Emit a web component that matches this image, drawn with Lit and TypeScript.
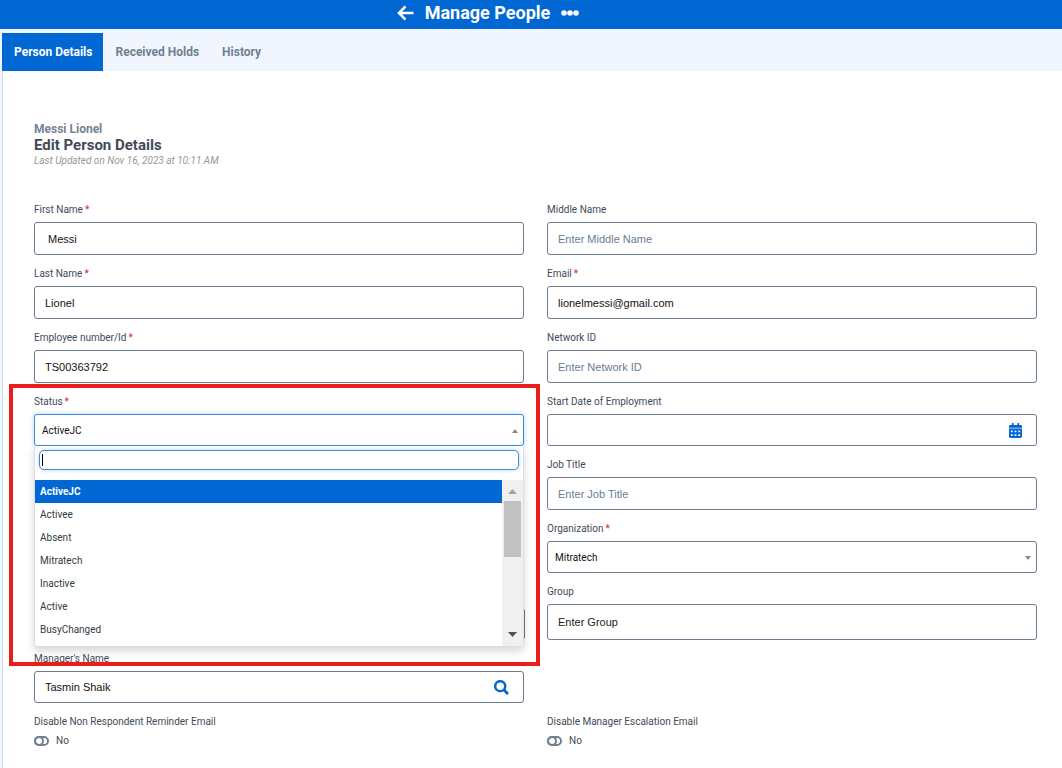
import { LitElement, html, css, svg, nothing } from "lit";
import { customElement, state } from "lit/decorators.js";
import { classMap } from "lit/directives/class-map.js";

const STATUSES = ["ActiveJC", "Activee", "Absent", "Mitratech", "Inactive", "Active", "BusyChanged"];
const TABS = ["Person Details", "Received Holds", "History"];

@customElement("app-root")
export class AppRoot extends LitElement {
  @state() private tab = "Person Details";
  @state() private status = "ActiveJC";

  static styles = css`
    :host {
      display: flex;
      flex-direction: column;
      min-height: 100vh;
      overflow: hidden;
      box-sizing: border-box;
      background: #f1f6fe;
      color: #414b57;
      font: 10px/16px Roboto, "Liberation Sans", sans-serif;
    }
    *, *::before, *::after { box-sizing: border-box; }
    button, input, select, textarea { font: inherit; margin: 0; border-radius: 0; }
    button { border: 0; background: none; padding: 0; color: inherit; }
    svg { display: block; }

    .topbar {
      display: flex;
      align-items: center;
      justify-content: center;
      height: 29px;
      padding: 0 86px 4px 0;
      background: #0067d3;
      color: #fff;
    }
    .title { margin: 0 11px; font-size: 18px; line-height: 24px; font-weight: 700; }

    .tabs { display: flex; padding: 4px 0 0 2px; }
    .tab { height: 38px; padding: 0 11px 0 12px; font-size: 12px; font-weight: 700; color: #70808f; }
    .tab.active { background: #0067d3; color: #fff; }

    .sheet {
      flex: 1;
      margin-left: 2px;
      padding: 50px 25px 16px 31px;
      border-left: 1px solid #d0deeb;
      background: #fff;
    }
    .person { font-size: 12px; font-weight: 700; color: #738494; margin: 0; }
    .heading { font-size: 15px; font-weight: 700; color: #3f4b58; margin: 0; }
    .updated { font-style: italic; color: #979797; margin: 0; }

    .form { display: flex; flex-direction: column; gap: 11px; margin-top: 33px; }
    .row { display: grid; grid-template-columns: 1fr 1fr; column-gap: 23px; align-items: end; }
    .field { position: relative; display: flex; flex-direction: column; gap: 4px; min-width: 0; }
    .label { height: 16px; }
    .req { color: #d8232f; margin-left: 2px; }

    .control { position: relative; display: flex; }
    .box {
      width: 100%;
      height: 33px;
      padding: 0 10px;
      border: 1px solid #6b7c90;
      border-radius: 3px;
      background: #fff;
      color: #111;
      font-family: "Liberation Sans", Arial, sans-serif;
      font-size: 11px;
      outline: none;
    }
    .box::placeholder { color: #6b7c8e; opacity: 1; }
    .box.short { height: 32px; }
    .box.tall { height: 36px; }
    .box.tall::placeholder { color: #222; }
    .box.select {
      height: 32px;
      padding: 2px 7px 0;
      font-family: Roboto, sans-serif;
      font-size: 10px;
      appearance: none;
    }
    .box.open { border-color: #3f8ad8; box-shadow: 0 0 5px #b5d5f7; }
    .box.notes { width: calc(100% + 1px); flex: none; height: 32px; resize: none; }
    .caret { position: absolute; right: 6px; top: 15px; pointer-events: none; }
    .icon { position: absolute; top: 9px; right: 15px; }

    .panel {
      position: absolute;
      z-index: 2;
      top: 100%;
      left: 0;
      right: 0;
      padding-top: 4px;
      border: 1px solid #dcdfe2;
      border-top: 0;
      border-radius: 0 0 4px 4px;
      background: #fff;
      box-shadow: 0 4px 9px rgba(0, 0, 0, 0.16);
    }
    .search { position: relative; display: flex; margin: 0 4px 10px; }
    .search-box {
      width: 100%;
      height: 20px;
      padding: 0 4px;
      border: 1px solid #3f8ad8;
      border-radius: 5px;
      box-shadow: 0 0 4px #b5d5f7;
      outline: none;
    }
    .text-caret { position: absolute; left: 3px; top: 4px; width: 1px; height: 12px; background: #000; }
    .list { display: flex; height: 166px; }
    .options { flex: 1; margin: 0; padding: 0; list-style: none; overflow: hidden; }
    .option { display: block; width: 100%; height: 23px; padding: 0 5px; text-align: left; color: #333b43; }
    .option.chosen { background: #0067d3; color: #fff; font-weight: 700; }
    .scroll {
      display: flex;
      flex-direction: column;
      align-items: center;
      width: 21px;
      padding: 9px 0;
      background: #f0f0f0;
    }
    .thumb { width: 17px; height: 56px; margin: 7px 0 auto; background: #c1c1c1; }

    .frame {
      position: absolute;
      z-index: 3;
      top: -10px;
      left: -25px;
      right: -16px;
      height: 282px;
      border: 4px solid #ea1d1d;
      pointer-events: none;
    }

    .toggle { display: flex; align-items: center; gap: 7px; height: 14px; }
    .switch {
      appearance: none;
      position: relative;
      width: 15px;
      height: 10px;
      border: 2px solid #70808f;
      border-radius: 5px;
      background: #fff;
    }
    .switch::before {
      content: "";
      position: absolute;
      left: -2px;
      top: -2px;
      width: 10px;
      height: 10px;
      border: 2px solid #70808f;
      border-radius: 5px;
    }
  `;

  private label(id: string, text: string, required = false) {
    return html`<label class="label" for=${id}>${text}${required ? html`<span class="req">*</span>` : nothing}</label>`;
  }

  private text(id: string, text: string, o: { value?: string; hint?: string; required?: boolean; kind?: string; icon?: unknown } = {}) {
    return html`<div class="field">
      ${this.label(id, text, o.required)}
      <div class="control">
        <input class="box ${o.kind ?? ""}" id=${id} type="text" .value=${o.value ?? ""} placeholder=${o.hint ?? ""} />
        ${o.icon ?? nothing}
      </div>
    </div>`;
  }

  private toggle(id: string, text: string) {
    return html`<div class="field">
      ${this.label(id, text)}
      <div class="toggle"><input class="switch" id=${id} type="checkbox" role="switch" /><span>No</span></div>
    </div>`;
  }

  private triangle(up: boolean, w: number, h: number, fill: string) {
    const d = up ? `M0 ${h}L${w / 2} 0L${w} ${h}z` : `M0 0L${w} 0L${w / 2} ${h}z`;
    return html`<svg width=${w} height=${h} viewBox="0 0 ${w} ${h}">${svg`<path d=${d} fill=${fill} />`}</svg>`;
  }

  private calendar() {
    return html`<button class="icon" aria-label="Choose date">
      <svg width="13" height="15" viewBox="0 0 448 512" fill="#0067d3">
        <path d="M0 464c0 26.500 21.500 48 48 48h352c26.500 0 48-21.500 48-48V192H0v272zm320-196c0-6.600 5.400-12 12-12h40c6.600 0 12 5.400 12 12v40c0 6.600-5.400 12-12 12h-40c-6.600 0-12-5.400-12-12v-40zm0 128c0-6.600 5.400-12 12-12h40c6.600 0 12 5.400 12 12v40c0 6.600-5.400 12-12 12h-40c-6.600 0-12-5.400-12-12v-40zM192 268c0-6.600 5.400-12 12-12h40c6.600 0 12 5.400 12 12v40c0 6.600-5.400 12-12 12h-40c-6.600 0-12-5.400-12-12v-40zm0 128c0-6.600 5.400-12 12-12h40c6.600 0 12 5.400 12 12v40c0 6.600-5.400 12-12 12h-40c-6.600 0-12-5.400-12-12v-40zM64 268c0-6.600 5.400-12 12-12h40c6.600 0 12 5.400 12 12v40c0 6.600-5.400 12-12 12H76c-6.600 0-12-5.400-12-12v-40zm0 128c0-6.600 5.400-12 12-12h40c6.600 0 12 5.400 12 12v40c0 6.600-5.400 12-12 12H76c-6.600 0-12-5.400-12-12v-40zM400 64h-48V16c0-8.800-7.200-16-16-16h-32c-8.800 0-16 7.200-16 16v48H160V16c0-8.800-7.200-16-16-16h-32c-8.800 0-16 7.200-16 16v48H48C21.500 64 0 85.500 0 112v48h448v-48c0-26.500-21.500-48-48-48z" />
        <path d="M0 158H448V194H0z" opacity=".6" />
      </svg>
    </button>`;
  }

  private magnifier() {
    return html`<button class="icon" aria-label="Find manager">
      <svg width="15" height="16" viewBox="0 0 15 16" fill="none" stroke="#0067d3">
        <circle cx="6.200" cy="6.200" r="5" stroke-width="2.500" />
        <path d="M9.800 9.800L14 14" stroke-width="3" />
      </svg>
    </button>`;
  }

  render() {
    return html`
      <header class="topbar">
        <button aria-label="Back">
          <svg width="17" height="16" viewBox="0 0 17 16" fill="none" stroke="#fff" stroke-width="2.600">
            <path d="M8.500 1.400L2 8l6.500 6.600M2.500 8H16.500" />
          </svg>
        </button>
        <h1 class="title">Manage People</h1>
        <button aria-label="More actions">
          <svg width="18" height="6" viewBox="0 0 18 6" fill="#fff">
            <circle cx="3" cy="3" r="2.800" /><circle cx="9" cy="3" r="2.800" /><circle cx="15" cy="3" r="2.800" />
          </svg>
        </button>
      </header>
      <nav class="tabs">
        ${TABS.map((t) => html`<button class=${classMap({ tab: true, active: t === this.tab })} @click=${() => (this.tab = t)}>${t}</button>`)}
      </nav>
      <main class="sheet">
        <p class="person">Messi Lionel</p>
        <h2 class="heading">Edit Person Details</h2>
        <p class="updated">Last Updated on Nov 16, 2023 at 10:11 AM</p>
        <div class="form">
          <div class="row">
            ${this.text("first", "First Name", { value: " Messi", required: true })}
            ${this.text("middle", "Middle Name", { hint: "Enter Middle Name" })}
          </div>
          <div class="row">
            ${this.text("last", "Last Name", { value: "Lionel", required: true })}
            ${this.text("email", "Email", { value: "lionelmessi@gmail.com", required: true })}
          </div>
          <div class="row">
            ${this.text("employee", "Employee number/Id", { value: "TS00363792", required: true })}
            ${this.text("network", "Network ID", { hint: "Enter Network ID" })}
          </div>
          <div class="row">
            <div class="field">
              ${this.label("status", "Status", true)}
              <div class="control">
                <select class="box select open" id="status" .value=${this.status}>
                  ${STATUSES.map((s) => html`<option ?selected=${s === this.status}>${s}</option>`)}
                </select>
                <span class="caret">${this.triangle(true, 6, 4, "#888")}</span>
              </div>
              <div class="panel">
                <div class="search">
                  <input class="search-box" type="text" aria-label="Search status" />
                  <span class="text-caret"></span>
                </div>
                <div class="list">
                  <ul class="options">
                    ${STATUSES.map((s) => html`<li><button class=${classMap({ option: true, chosen: s === this.status })} @click=${() => (this.status = s)}>${s}</button></li>`)}
                  </ul>
                  <div class="scroll">
                    ${this.triangle(true, 9, 5, "#a3a3a3")}
                    <div class="thumb"></div>
                    ${this.triangle(false, 9, 5, "#505050")}
                  </div>
                </div>
              </div>
              <div class="frame"></div>
            </div>
            ${this.text("start", "Start Date of Employment", { kind: "short", icon: this.calendar() })}
          </div>
          <div class="row">
            <span></span>
            ${this.text("job", "Job Title", { hint: "Enter Job Title" })}
          </div>
          <div class="row">
            <span></span>
            <div class="field">
              ${this.label("organization", "Organization", true)}
              <div class="control">
                <select class="box select" id="organization"><option>Mitratech</option></select>
                <span class="caret">${this.triangle(false, 6, 4, "#888")}</span>
              </div>
            </div>
          </div>
          <div class="row">
            <div class="control"><textarea class="box notes" aria-label="Notes"></textarea></div>
            ${this.text("group", "Group", { hint: "Enter Group", kind: "tall" })}
          </div>
          <div class="row">
            ${this.text("manager", "Manager's Name", { value: "Tasmin Shaik", kind: "short", icon: this.magnifier() })}
          </div>
          <div class="row">
            ${this.toggle("reminder", "Disable Non Respondent Reminder Email")}
            ${this.toggle("escalation", "Disable Manager Escalation Email")}
          </div>
        </div>
      </main>
    `;
  }
}
